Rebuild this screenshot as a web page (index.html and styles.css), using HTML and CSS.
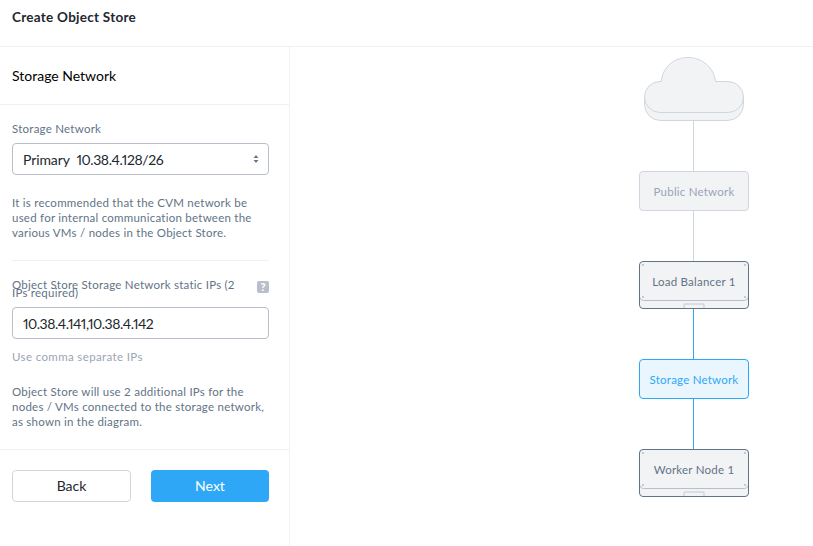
FILE: index.html
```
<!DOCTYPE html>
<html lang="en">
<head>
<meta charset="utf-8">
<title>Create Object Store</title>
<link rel="stylesheet" href="styles.css">
</head>
<body>
<header class="header"><h1>Create Object Store</h1></header>
<main class="main">
  <aside class="sidebar">
    <h2 class="section-title">Storage Network</h2>
    <div class="form">
      <div class="label">Storage Network</div>
      <div class="control"><span>Primary&nbsp; <span class="ip">10.38.4.128/26</span></span>
        <svg class="arrows" width="6" height="8" viewBox="0 0 6 8"><path d="M.6 3 3 0l2.400 3zM.6 5h4.800L3 8z" fill="#627386"/></svg>
      </div>
      <p class="note">It is recommended that the CVM network be<br>used for internal communication between the<br>various VMs / nodes in the Object Store.</p>
      <hr class="rule">
      <div class="label-row"><div class="tight">Object Store Storage Network static IPs (2<br>IPs required)</div><span class="help">?</span></div>
      <div class="control"><span class="ip ip-list">10.38.4.141,10.38.4.142</span></div>
      <div class="hint">Use comma separate IPs</div>
      <p class="note last">Object Store will use 2 additional IPs for the<br>nodes / VMs connected to the storage network,<br>as shown in the diagram.</p>
    </div>
    <div class="actions"><button class="btn">Back</button><button class="btn primary">Next</button></div>
  </aside>
  <section class="diagram">
    <svg class="cloud" width="100" height="64" viewBox="0 0 100 64" fill="#f2f3f5" stroke="#d1d6de"><path d="M.5 40v7.500a16 16 0 0 0 16 16h67a16 16 0 0 0 16-16V40z"/><path d="M16 24.500h1.300C18.500 10.700 29.500.5 44 .5s26 10.500 27.500 24H84A15.500 15.500 0 0 1 84 55.500H16A15.500 15.500 0 0 1 16 24.500z"/></svg>
    <i class="line grey"></i>
    <div class="node">Public Network</div>
    <i class="line grey"></i>
    <div class="node server">
      <svg class="chassis" width="108" height="46" viewBox="0 0 108 46"><path d="M0 35.500q.5 3 3.500 3h101q3 0 3.500-3" fill="none" stroke="#b8bfca"/><path d="M2 2h2v2H2zM104 2h2v2h-2zM2 34h2v2H2zM104 34h2v2h-2z" fill="#c4cad3"/><path d="M44 46v-2.500q0-1.500 1.500-1.500h17q1.500 0 1.500 1.500V46" fill="none" stroke="#d1d6de" stroke-width="1.500"/></svg>
      Load Balancer 1</div>
    <i class="line"></i>
    <div class="node active">Storage Network</div>
    <i class="line"></i>
    <div class="node server">
      <svg class="chassis" width="108" height="46" viewBox="0 0 108 46"><path d="M0 35.500q.5 3 3.500 3h101q3 0 3.500-3" fill="none" stroke="#b8bfca"/><path d="M2 2h2v2H2zM104 2h2v2h-2zM2 34h2v2H2zM104 34h2v2h-2z" fill="#c4cad3"/><path d="M44 46v-2.500q0-1.500 1.500-1.500h17q1.500 0 1.500 1.500V46" fill="none" stroke="#d1d6de" stroke-width="1.500"/></svg>
      Worker Node 1</div>
  </section>
</main>
</body>
</html>
```
FILE: styles.css
```
* { box-sizing: border-box; }
body { margin: 0; width: 813px; height: 546px; overflow: hidden; background: #fff; color: #22272e; font-family: Lato, "Liberation Sans", sans-serif; font-size: 14px; display: flex; flex-direction: column; }
h1, h2, p { margin: 0; font-weight: 400; }
.header { height: 47px; padding: 9px 12px; border-bottom: 1px solid #f0f1f3; }
.header h1 { font-size: 13.5px; line-height: 17px; font-weight: 700; letter-spacing: .27px; }
.main { flex: 1; display: flex; }
.sidebar { width: 290px; border-right: 1px solid #f0f1f3; }
.section-title { height: 58px; padding-left: 12px; line-height: 57px; font-size: 14px; color: #000; border-bottom: 1px solid #f0f1f3; }
.form { height: 345px; padding: 16px 20px 0 12px; border-bottom: 1px solid #f0f1f3; color: #627386; font-size: 11.5px; letter-spacing: .24px; }
.label { line-height: 15px; margin-bottom: 7px; }
.control { height: 32px; display: flex; align-items: center; justify-content: space-between; padding: 1px 9px 0 10px; border: 1px solid #b8bfca; border-radius: 4px; color: #22272e; font-size: 14px; letter-spacing: -.1px; }
.ip { font-variant-numeric: proportional-nums; letter-spacing: -.4px; }
.ip-list { letter-spacing: -.45px; }
.arrows { margin-bottom: 1px; }
.note { margin-top: 20px; line-height: 15px; }
.rule { height: 1px; margin: 20px 0 17px; border: 0; background: #f0f1f3; }
.label-row { height: 29px; display: flex; justify-content: space-between; }
.tight { padding-top: 3px; line-height: 8px; }
.help { width: 12px; height: 12px; margin-top: 3px; border-radius: 2px; background: #b8bfca; color: #fff; font-weight: 900; font-size: 11px; line-height: 12px; text-align: center; letter-spacing: 0; }
.hint { margin-top: 10px; line-height: 15px; color: #9aa5b5; letter-spacing: .37px; }
.last { margin-top: 20px; }
.actions { display: flex; gap: 20px; padding: 20px 20px 0 12px; }
.btn { width: 119px; height: 32px; padding: 0 0 2px; border: 1px solid #d1d6de; border-radius: 4px; background: #fff; color: #22272e; font: inherit; }
.primary { width: 118px; border: 0; background: #2fa7f7; color: #fff; }
.diagram { flex: 1; display: flex; flex-direction: column; align-items: center; padding: 10px 0 0 285px; }
.cloud { flex: none; }
.line { width: 1px; height: 50px; margin-right: 1px; background: #2fa7f7; }
.grey { background: #d1d6de; }
.node { position: relative; width: 110px; height: 40px; border: 1px solid #d1d6de; border-radius: 4px; background: #f2f3f5; color: #9aa5b5; font-size: 11.5px; letter-spacing: .22px; line-height: 40px; text-align: center; }
.active { border-color: #2fa7f7; background: #e9f6fe; color: #2fa7f7; }
.server { height: 48px; border-color: #627386; color: #627386; }
.chassis { position: absolute; left: 0; top: 0; }
```
